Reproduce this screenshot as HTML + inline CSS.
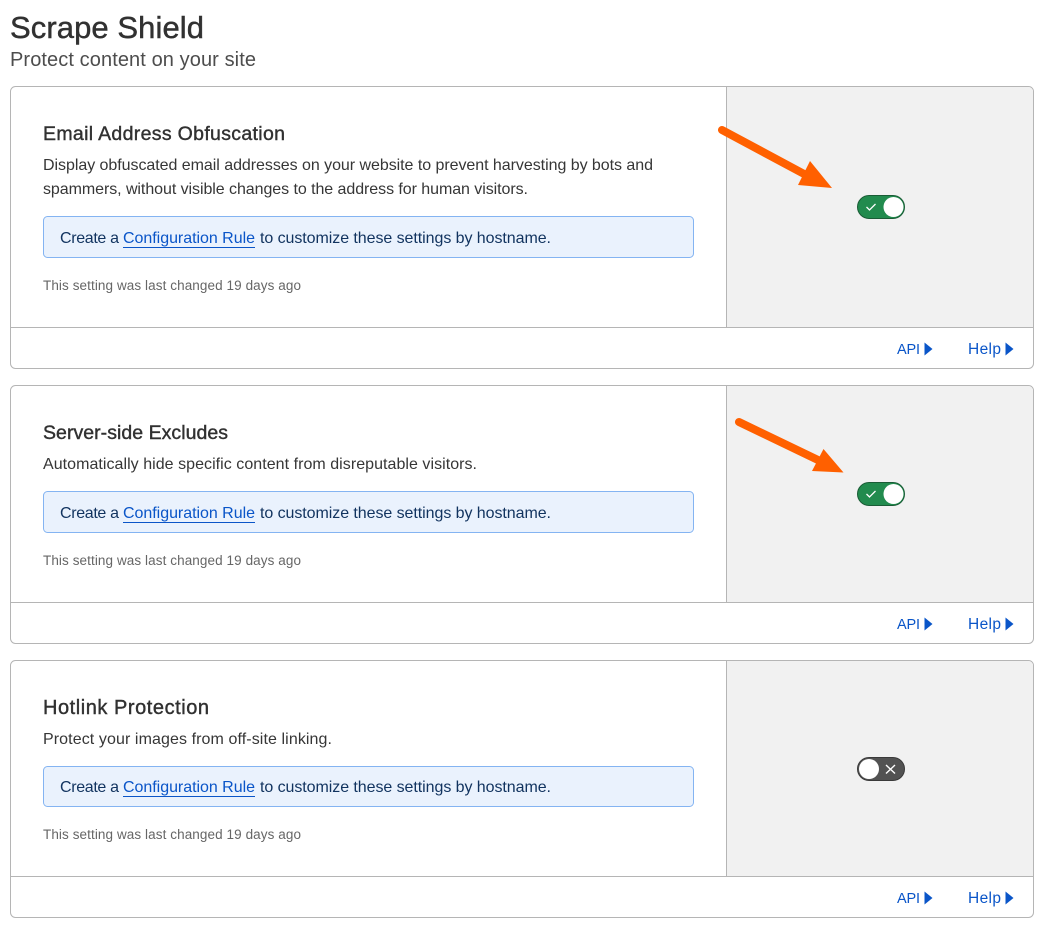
<!DOCTYPE html>
<html lang="en">
<head>
<meta charset="utf-8">
<title>Scrape Shield</title>
<style>
html,body{margin:0;padding:0;background:#fff;width:1048px;height:934px;overflow:hidden}
svg{display:block}
text{font-family:"Liberation Sans",Arial,sans-serif;white-space:pre}
.h1{font-size:31px;fill:#313131;stroke:#313131;stroke-width:.45px}
.sub{font-size:20px;fill:#4d4d4d}
.h2{font-size:19.500px;fill:#313131;stroke:#313131;stroke-width:.4px}
.p{font-size:16px;fill:#363636}
.n{font-size:16px;fill:#11335f}
.a{font-size:16px;fill:#0a55c8}
.m{font-size:13.5px;fill:#666}
.f{font-size:15.500px;fill:#0a55c8}
.api{font-size:14.500px;fill:#0a55c8}
.card{fill:#fff;stroke:#b5b5b5;stroke-width:1}
.line{stroke:#b5b5b5;stroke-width:1}
.panel{fill:#f1f1f1}
.box{fill:#eaf2fd;stroke:#84b4f2;stroke-width:1}
</style>
</head>
<body>
<svg width="1048" height="934" viewBox="0 0 1048 934" xmlns="http://www.w3.org/2000/svg">
<text class="h1" x="10" y="38" textLength="194" lengthAdjust="spacing">Scrape Shield</text>
<text class="sub" x="10" y="66" textLength="246" lengthAdjust="spacing">Protect content on your site</text>

<!-- Card 1 -->
<rect class="card" x="10.500" y="86.500" width="1023" height="282" rx="5"/>
<path class="panel" d="M727 87H1028.500a4.500 4.500 0 0 1 4.500 4.500V327H727z"/>
<path class="line" d="M726.500 87V327M11 327.500H1033"/>
<text class="h2" x="43" y="140" textLength="242" lengthAdjust="spacing">Email Address Obfuscation</text>
<text class="p" x="43" y="170" textLength="610" lengthAdjust="spacing">Display obfuscated email addresses on your website to prevent harvesting by bots and</text>
<text class="p" x="43" y="194" textLength="485" lengthAdjust="spacing">spammers, without visible changes to the address for human visitors.</text>
<rect class="box" x="43.500" y="216.500" width="650" height="41" rx="4"/>
<text class="n" x="60" y="243" textLength="59" lengthAdjust="spacing">Create a</text>
<text class="a" x="123" y="243" textLength="132" lengthAdjust="spacing">Configuration Rule</text>
<path d="M123 247.500H255" stroke="#0a55c8" stroke-width="1"/>
<text class="n" x="260" y="243" textLength="291" lengthAdjust="spacing">to customize these settings by hostname.</text>
<text class="m" x="43" y="290" textLength="258" lengthAdjust="spacing">This setting was last changed 19 days ago</text>
<text class="api" x="897" y="354" textLength="23" lengthAdjust="spacing">API</text>
<path d="M924.500 342.500L932.500 349L924.500 355.500z" fill="#0a55c8"/>
<text class="f" x="968" y="354" textLength="33" lengthAdjust="spacing">Help</text>
<path d="M1005.500 342.500L1013.500 349L1005.500 355.500z" fill="#0a55c8"/>
<rect x="857.500" y="195.500" width="47" height="23" rx="11.500" fill="#228b4e" stroke="#1a5c36"/>
<circle cx="893.500" cy="207" r="10" fill="#fff"/>
<path d="M866.500 207L869.500 210L875.500 204" fill="none" stroke="#fff" stroke-width="1.300"/>
<path d="M722 130L806 175" stroke="#ff6000" stroke-width="8" stroke-linecap="round" fill="none"/>
<path d="M810 161L832 188L798 185z" fill="#ff6000"/>

<!-- Card 2 -->
<rect class="card" x="10.500" y="385.500" width="1023" height="258" rx="5"/>
<path class="panel" d="M727 386H1028.500a4.500 4.500 0 0 1 4.500 4.500V602H727z"/>
<path class="line" d="M726.500 386V602M11 602.500H1033"/>
<text class="h2" x="43" y="439" textLength="185" lengthAdjust="spacing">Server-side Excludes</text>
<text class="p" x="43" y="469" textLength="434" lengthAdjust="spacing">Automatically hide specific content from disreputable visitors.</text>
<rect class="box" x="43.500" y="491.500" width="650" height="41" rx="4"/>
<text class="n" x="60" y="518" textLength="59" lengthAdjust="spacing">Create a</text>
<text class="a" x="123" y="518" textLength="132" lengthAdjust="spacing">Configuration Rule</text>
<path d="M123 522.500H255" stroke="#0a55c8" stroke-width="1"/>
<text class="n" x="260" y="518" textLength="291" lengthAdjust="spacing">to customize these settings by hostname.</text>
<text class="m" x="43" y="565" textLength="258" lengthAdjust="spacing">This setting was last changed 19 days ago</text>
<text class="api" x="897" y="629" textLength="23" lengthAdjust="spacing">API</text>
<path d="M924.500 617.500L932.500 624L924.500 630.500z" fill="#0a55c8"/>
<text class="f" x="968" y="629" textLength="33" lengthAdjust="spacing">Help</text>
<path d="M1005.500 617.500L1013.500 624L1005.500 630.500z" fill="#0a55c8"/>
<rect x="857.500" y="482.500" width="47" height="23" rx="11.500" fill="#228b4e" stroke="#1a5c36"/>
<circle cx="893.500" cy="494" r="10" fill="#fff"/>
<path d="M866.500 494L869.500 497L875.500 491" fill="none" stroke="#fff" stroke-width="1.300"/>
<path d="M739 422L818 460" stroke="#ff6000" stroke-width="8" stroke-linecap="round" fill="none"/>
<path d="M823.500 449L843.500 472.500L812 471z" fill="#ff6000"/>

<!-- Card 3 -->
<rect class="card" x="10.500" y="660.500" width="1023" height="257" rx="5"/>
<path class="panel" d="M727 661H1028.500a4.500 4.500 0 0 1 4.500 4.500V876H727z"/>
<path class="line" d="M726.500 661V876M11 876.500H1033"/>
<text class="h2" x="43" y="714" textLength="166" lengthAdjust="spacing" style="font-size:20px">Hotlink Protection</text>
<text class="p" x="43" y="744" textLength="289" lengthAdjust="spacing">Protect your images from off-site linking.</text>
<rect class="box" x="43.500" y="766.500" width="650" height="40" rx="4"/>
<text class="n" x="60" y="792" textLength="59" lengthAdjust="spacing">Create a</text>
<text class="a" x="123" y="792" textLength="132" lengthAdjust="spacing">Configuration Rule</text>
<path d="M123 796.500H255" stroke="#0a55c8" stroke-width="1"/>
<text class="n" x="260" y="792" textLength="291" lengthAdjust="spacing">to customize these settings by hostname.</text>
<text class="m" x="43" y="839" textLength="258" lengthAdjust="spacing">This setting was last changed 19 days ago</text>
<text class="api" x="897" y="903" textLength="23" lengthAdjust="spacing">API</text>
<path d="M924.500 891.500L932.500 898L924.500 904.500z" fill="#0a55c8"/>
<text class="f" x="968" y="903" textLength="33" lengthAdjust="spacing">Help</text>
<path d="M1005.500 891.500L1013.500 898L1005.500 904.500z" fill="#0a55c8"/>
<rect x="857.500" y="757.500" width="47" height="23" rx="11.500" fill="#525252" stroke="#3a3a3a"/>
<circle cx="869" cy="769" r="10" fill="#fff"/>
<path d="M886 765L895 773.500M895 765L886 773.500" fill="none" stroke="#fff" stroke-width="1.400"/>
</svg>
</body>
</html>
